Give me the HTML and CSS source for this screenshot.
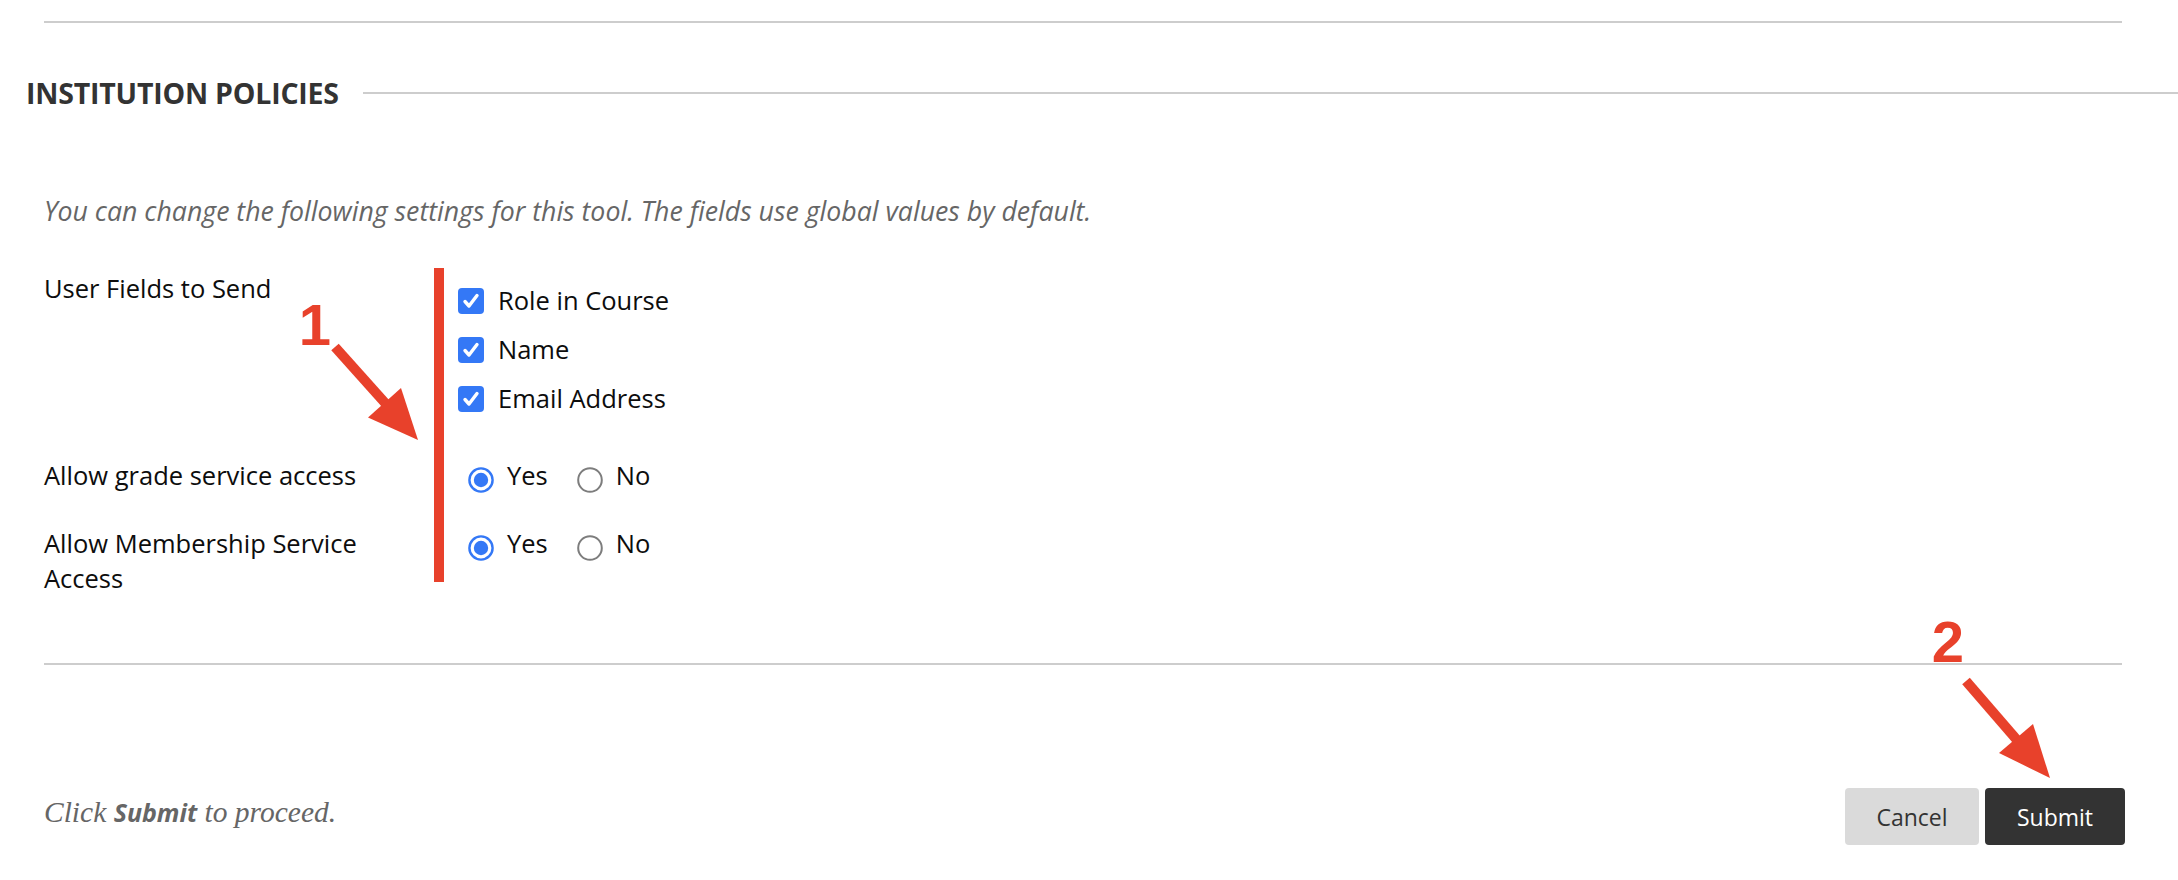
FILE: index.html
```html
<!DOCTYPE html>
<html lang="en">
<head>
<meta charset="utf-8">
<title>Institution Policies</title>
<link rel="stylesheet" href="styles.css">
</head>
<body>
<div class="page">
  <div class="rule top-rule"></div>

  <div class="section-head">
    <h2 class="section-title">INSTITUTION POLICIES</h2>
    <span class="section-line"></span>
  </div>

  <p class="intro">You can change the following settings for this tool. The fields use global values by default.</p>

  <div class="fields">
    <div class="field-label l1">User Fields to Send</div>
    <div class="marker"></div>
    <div class="controls checks c1">
      <label class="check-item"><span class="cb"><svg viewBox="0 0 26 26" width="26" height="26"><rect x="0" y="0" width="26" height="26" rx="4" fill="#3478f6"/><path d="M7 13.5 L11 18 L19 7.5" fill="none" stroke="#fff" stroke-width="3.4" stroke-linecap="round" stroke-linejoin="round"/></svg></span>Role in Course</label>
      <label class="check-item"><span class="cb"><svg viewBox="0 0 26 26" width="26" height="26"><rect x="0" y="0" width="26" height="26" rx="4" fill="#3478f6"/><path d="M7 13.5 L11 18 L19 7.5" fill="none" stroke="#fff" stroke-width="3.4" stroke-linecap="round" stroke-linejoin="round"/></svg></span>Name</label>
      <label class="check-item"><span class="cb"><svg viewBox="0 0 26 26" width="26" height="26"><rect x="0" y="0" width="26" height="26" rx="4" fill="#3478f6"/><path d="M7 13.5 L11 18 L19 7.5" fill="none" stroke="#fff" stroke-width="3.4" stroke-linecap="round" stroke-linejoin="round"/></svg></span>Email Address</label>
    </div>

    <div class="field-label l2">Allow grade service access</div>
    <div class="controls radios c2">
      <label class="radio-item"><span class="rb"><svg viewBox="0 0 26 26" width="26" height="26"><circle cx="13" cy="13" r="11.6" fill="#fff" stroke="#3478f6" stroke-width="2.4"/><circle cx="13" cy="13" r="7.2" fill="#3478f6"/></svg></span>Yes</label>
      <label class="radio-item"><span class="rb"><svg viewBox="0 0 26 26" width="26" height="26"><circle cx="13" cy="13" r="11.8" fill="#fff" stroke="#7d7d7d" stroke-width="2"/></svg></span>No</label>
    </div>

    <div class="field-label l3">Allow Membership Service Access</div>
    <div class="controls radios c3">
      <label class="radio-item"><span class="rb"><svg viewBox="0 0 26 26" width="26" height="26"><circle cx="13" cy="13" r="11.6" fill="#fff" stroke="#3478f6" stroke-width="2.4"/><circle cx="13" cy="13" r="7.2" fill="#3478f6"/></svg></span>Yes</label>
      <label class="radio-item"><span class="rb"><svg viewBox="0 0 26 26" width="26" height="26"><circle cx="13" cy="13" r="11.8" fill="#fff" stroke="#7d7d7d" stroke-width="2"/></svg></span>No</label>
    </div>
  </div>

  <div class="rule bottom-rule"></div>

  <div class="submit-row">
    <p class="submit-note">Click <strong>Submit</strong> to proceed.</p>
    <div class="buttons">
      <button class="btn btn-cancel" type="button">Cancel</button>
      <button class="btn btn-submit" type="button">Submit</button>
    </div>
  </div>

  <svg class="annotations" width="2178" height="880" viewBox="0 0 2178 880">
    <g fill="#e8412b" stroke="none">
      <line x1="335" y1="347" x2="386" y2="404" stroke="#e8412b" stroke-width="10"/>
      <polygon points="418,440 368,417.5 401,388"/>
      <line x1="1966" y1="681" x2="2017" y2="740" stroke="#e8412b" stroke-width="10"/>
      <polygon points="2050,778 1999,753 2033,724"/>
      <text class="anno-num" x="315" y="345" text-anchor="middle">1</text>
      <text class="anno-num" x="1948" y="662" text-anchor="middle">2</text>
    </g>
  </svg>
</div>
</body>
</html>
```

FILE: styles.css
```css
html, body {
  margin: 0;
  padding: 0;
  background: #ffffff;
}

body {
  font-family: "Open Sans", "Noto Sans", sans-serif;
  color: #1a1a1a;
  width: 2178px;
  height: 880px;
  overflow: hidden;
}

.page {
  position: relative;
  width: 2178px;
  height: 880px;
  padding: 21px 0 0 44px;
  box-sizing: border-box;
}

.rule {
  height: 2px;
  background: #cdcdcd;
  width: 2078px;
}

.section-head {
  display: flex;
  align-items: center;
  margin-top: 52px;
  margin-left: -18px;
  height: 36px;
}

.section-title {
  margin: 0;
  font-size: 28.5px;
  font-weight: 700;
  color: #333333;
  line-height: 36px;
  letter-spacing: -0.2px;
}

.section-line {
  flex: 1;
  height: 2px;
  background: #cdcdcd;
  margin-left: 24px;
}

.intro {
  margin: 84px 0 0 0;
  font-size: 26.7px;
  line-height: 32px;
  font-style: italic;
  color: #666666;
}

.fields {
  display: grid;
  grid-template-columns: 390px 10px 1fr;
  margin-top: 41px;
}

.field-label {
  grid-column: 1;
  font-size: 25.5px;
  line-height: 35px;
  color: #0d0d0d;
  width: 330px;
}

.l1 { grid-row: 1; padding-top: 3px; }
.l2 { grid-row: 2; padding-top: 35px; }
.l3 { grid-row: 3; padding-top: 33px; }

.marker {
  grid-column: 2;
  grid-row: 1 / 4;
  background: #e8412b;
  margin-bottom: 14px;
}

.controls {
  grid-column: 3;
  font-size: 25.5px;
  color: #0d0d0d;
}

.c1 { grid-row: 1; padding: 8px 0 0 14px; }
.c2 { grid-row: 2; padding: 35px 0 0 24px; }
.c3 { grid-row: 3; padding: 33px 0 0 24px; }

.checks {
  display: flex;
  flex-direction: column;
}

.check-item {
  display: flex;
  align-items: center;
  height: 49px;
  line-height: 35px;
}

.cb {
  display: inline-flex;
  width: 26px;
  height: 26px;
  margin-right: 14px;
}

.radios {
  display: flex;
  align-items: center;
  gap: 29px;
  height: 35px;
}

.radio-item {
  display: flex;
  align-items: center;
  line-height: 35px;
}

.rb {
  display: inline-flex;
  width: 26px;
  height: 26px;
  margin-right: 13px;
  margin-top: 8px;
}

.bottom-rule {
  margin-top: 67px;
}

.submit-row {
  display: flex;
  justify-content: space-between;
  align-items: center;
  width: 2081px;
  margin-top: 123px;
}

.submit-note {
  margin: 0;
  font-family: "Liberation Serif", "DejaVu Serif", serif;
  font-style: italic;
  font-size: 29.5px;
  color: #666666;
  line-height: 32px;
  margin-top: -10px;
}

.submit-note strong {
  font-family: "Open Sans", sans-serif;
  font-weight: 700;
  font-size: 25px;
}

.buttons {
  display: flex;
  gap: 6px;
}

.btn {
  font-family: "Open Sans", sans-serif;
  font-size: 23px;
  height: 57px;
  border: none;
  border-radius: 4px;
  padding: 0;
  cursor: pointer;
}

.btn-cancel {
  width: 134px;
  background: #dadada;
  color: #333333;
}

.btn-submit {
  width: 140px;
  background: #333333;
  color: #ffffff;
}

.annotations {
  position: absolute;
  top: 0;
  left: 0;
  pointer-events: none;
}

.anno-num {
  font-family: "Liberation Sans", Arial, sans-serif;
  font-weight: 700;
  font-size: 58px;
}
```
